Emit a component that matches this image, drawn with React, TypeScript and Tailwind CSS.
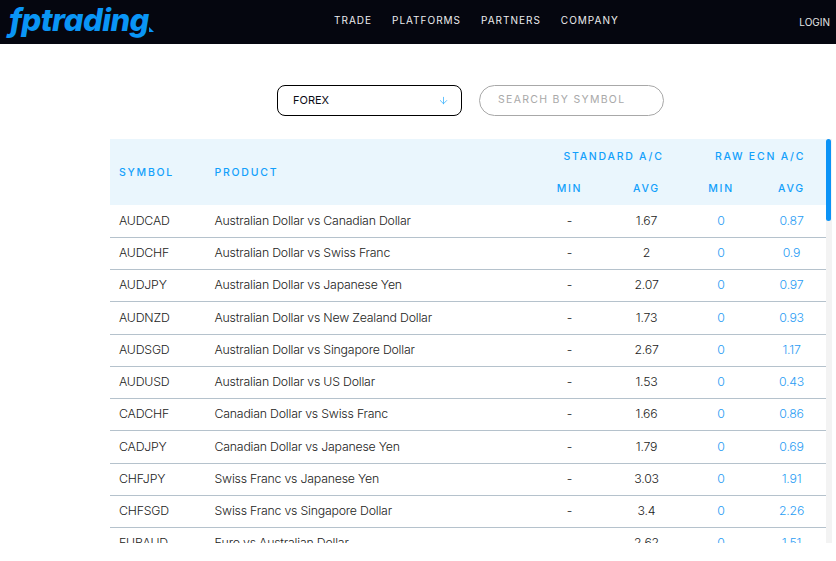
import { ArrowDown } from "lucide-react";

const navItems = ["TRADE", "PLATFORMS", "PARTNERS", "COMPANY"];

const rows = [
  { symbol: "AUDCAD", product: "Australian Dollar vs Canadian Dollar", avg: "1.67", rawAvg: "0.87" },
  { symbol: "AUDCHF", product: "Australian Dollar vs Swiss Franc", avg: "2", rawAvg: "0.9" },
  { symbol: "AUDJPY", product: "Australian Dollar vs Japanese Yen", avg: "2.07", rawAvg: "0.97" },
  { symbol: "AUDNZD", product: "Australian Dollar vs New Zealand Dollar", avg: "1.73", rawAvg: "0.93" },
  { symbol: "AUDSGD", product: "Australian Dollar vs Singapore Dollar", avg: "2.67", rawAvg: "1.17" },
  { symbol: "AUDUSD", product: "Australian Dollar vs US Dollar", avg: "1.53", rawAvg: "0.43" },
  { symbol: "CADCHF", product: "Canadian Dollar vs Swiss Franc", avg: "1.66", rawAvg: "0.86" },
  { symbol: "CADJPY", product: "Canadian Dollar vs Japanese Yen", avg: "1.79", rawAvg: "0.69" },
  { symbol: "CHFJPY", product: "Swiss Franc vs Japanese Yen", avg: "3.03", rawAvg: "1.91" },
  { symbol: "CHFSGD", product: "Swiss Franc vs Singapore Dollar", avg: "3.4", rawAvg: "2.26" },
  { symbol: "EURAUD", product: "Euro vs Australian Dollar", avg: "2.62", rawAvg: "1.51" },
];

const App = () => {
  return (
    <div className="h-[561px] overflow-hidden bg-white font-['Inter',sans-serif]">
      <header className="flex h-[44px] items-center bg-[#05060f]">
        <div className="ml-[9px] flex w-[299px] -translate-y-[3px] items-end font-['Inter',sans-serif] text-[31px] leading-none font-extrabold tracking-[-0.55px] text-[#0a95f5] italic">
          fptrading
          <svg viewBox="0 0 6 6" className="mb-[3px] h-[5px] w-[5px]">
            <path d="M0 0L6 6H0Z" fill="#0a95f5" />
          </svg>
        </div>
        <nav className="ml-[26px] flex -translate-y-[2px] gap-[20px] text-[10px] tracking-[1px] text-[#ececee]">
          {navItems.map((item) => (
            <span key={item}>{item}</span>
          ))}
        </nav>
        <span className="mr-[6px] ml-auto text-[10px] text-[#e4e4e6]">LOGIN</span>
      </header>

      <div className="flex justify-center gap-[17px] pt-[41px] pl-[105px]">
        <div className="flex h-[31px] w-[185px] items-center justify-between rounded-[8px] border border-black pr-[12px] pl-[15px] text-[11px] text-[#0b0b14]">
          FOREX
          <ArrowDown className="h-[11px] w-[11px] text-[#1ea7fd]" strokeWidth={1.5} />
        </div>
        <div className="flex h-[31px] w-[185px] items-center rounded-full border border-[#a8a8a8] pb-[2px] pl-[18px] text-[10.5px] tracking-[1.3px] text-[#a9a9a9]">
          SEARCH BY SYMBOL
        </div>
      </div>

      <div className="relative mt-[23px] ml-[110px] h-[404px] w-[722px] overflow-hidden bg-[#f3f3f3]">
        <table className="w-[716px] table-fixed border-collapse bg-white text-[12.3px] font-light tracking-[-0.2px] text-[#1c1c22]">
          <colgroup>
            <col className="w-[95px]" />
            <col className="w-[325px]" />
            <col className="w-[78px]" />
            <col className="w-[77px]" />
            <col className="w-[72px]" />
            <col className="w-[69px]" />
          </colgroup>
          <thead className="bg-[#eaf6fd] text-[10.5px] tracking-[1.75px] text-[#12a0fb]">
            <tr className="h-[34px]">
              <th rowSpan={2} className="pt-[2px] pl-[9px] text-left font-medium">SYMBOL</th>
              <th rowSpan={2} className="pt-[2px] pl-[9.5px] text-left font-medium">PRODUCT</th>
              <th colSpan={2} className="pt-[1px] pl-[12px] text-center font-medium">STANDARD A/C</th>
              <th colSpan={2} className="pt-[1px] pl-[9px] text-center font-medium">RAW ECN A/C</th>
            </tr>
            <tr className="h-[32px]">
              <th className="pl-[1px] text-center font-medium">MIN</th>
              <th className="text-center font-medium">AVG</th>
              <th className="text-center font-medium">MIN</th>
              <th className="text-center font-medium">AVG</th>
            </tr>
          </thead>
          <tbody>
            {rows.map((row) => (
              <tr key={row.symbol} className="h-[32.25px] border-b border-[#b5c2cc]">
                <td className="pl-[9px]">{row.symbol}</td>
                <td className="pl-[9.5px]">{row.product}</td>
                <td className="pl-[1px] text-center">-</td>
                <td className="text-center">{row.avg}</td>
                <td className="text-center text-[#2a9df4]">0</td>
                <td className="text-center text-[#2a9df4]">{row.rawAvg}</td>
              </tr>
            ))}
          </tbody>
        </table>
        <div className="absolute top-0 right-[1px] h-[82px] w-[5px] rounded-full bg-[#0b93f6]" />
      </div>
    </div>
  );
};

export default App;
